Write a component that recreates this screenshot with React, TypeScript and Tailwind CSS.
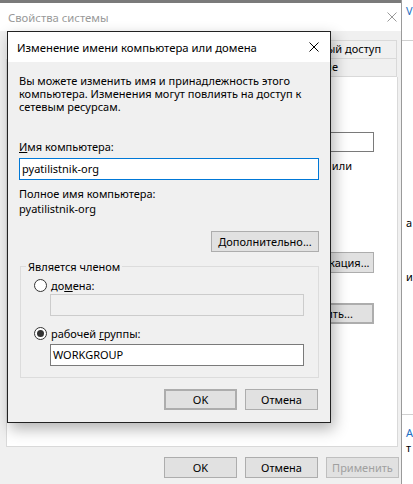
import type { ReactNode } from "react";

function CloseIcon({ color = "#000" }: { color?: string }) {
  return (
    <svg width="10" height="10" viewBox="0 0 10 10">
      <path d="M0.5 0.5 L9.5 9.5 M9.5 0.5 L0.5 9.5" stroke={color} strokeWidth="1" />
    </svg>
  );
}

function Btn({
  children,
  className = "",
}: {
  children: ReactNode;
  className?: string;
}) {
  return (
    <div
      className={`flex items-center justify-center h-[21px] bg-[#e1e1e1] border border-[#adadad] leading-[15px] whitespace-nowrap overflow-hidden ${className}`}
    >
      {children}
    </div>
  );
}

function Radio({ checked }: { checked?: boolean }) {
  return (
    <div className="flex items-center justify-center w-[13px] h-[13px] rounded-full border border-[#333] bg-white">
      {checked && <div className="w-[7px] h-[7px] rounded-full bg-[#333]" />}
    </div>
  );
}

// "Свойства системы" window, mostly covered by the dialog
function BackgroundWindow() {
  return (
    <div className="flex flex-col w-[405px] h-full border-r border-[#9a9a9a] bg-[#f0f0f0]">
      <div className="h-[3px] bg-[#7a7a7a]" />
      <div className="flex items-center justify-between h-[28px] bg-white pl-[8px] pr-[4px]">
        <span className="text-[#999] text-[11.3px] leading-[15px]">Свойства системы</span>
        <CloseIcon color="#999" />
      </div>

      <div className="pt-[9px]">
        <div className="flex h-[19px] ml-[8px] mr-[4px]">
          <div className="flex-1 border border-[#d9d9d9] border-r-0" />
          <div className="flex-1 border border-[#d9d9d9] border-r-0" />
          <div className="flex-1 flex items-center justify-center border border-[#d9d9d9] whitespace-nowrap">
            Удаленный доступ
          </div>
        </div>
        <div className="flex h-[18px] ml-[6px] mr-[4px]">
          <div className="flex-1 bg-white border-l border-[#d9d9d9]" />
          <div className="flex-1 flex items-center justify-center border-x border-b border-[#d9d9d9] whitespace-nowrap">
            Оборудование
          </div>
        </div>
      </div>

      <div className="flex flex-col items-end h-[370px] ml-[6px] mr-[3px] bg-white border border-t-0 border-[#d9d9d9] pr-[23px]">
        <div className="mt-[55px] h-[20px] w-[220px] border border-[#7a7a7a]" />
        <div className="mt-[6px] mr-[22px] h-[15px] leading-[15px] whitespace-nowrap">
          "Компьютер в гостиной" или
        </div>
        <Btn className="mt-[79px] w-[104px]">Идентификация...</Btn>
        <Btn className="mt-[30px] w-[104px] border-2 border-[#0078d7]">Изменить...</Btn>
      </div>

      <div className="flex justify-end gap-[8px] pr-[2px] mt-[10px]">
        <Btn className="w-[73px]">OK</Btn>
        <Btn className="w-[73px]">Отмена</Btn>
        <Btn className="w-[73px] bg-[#cccccc] border-[#bfbfbf] text-[#a0a0a0]">Применить</Btn>
      </div>
    </div>
  );
}

function RightStrip() {
  return (
    <div className="flex-1 flex flex-col bg-white pl-[4px] whitespace-nowrap leading-[15px]">
      <div className="mt-[3px] text-[#1e6fc4]">V</div>
      <div className="mt-[22px] -ml-[4px] h-px bg-[#d0d0d0]" />
      <div className="mt-[174px]">а</div>
      <div className="mt-[39px]">и</div>
      <div className="mt-[130px] -ml-[4px] h-px bg-[#d0d0d0]" />
      <div className="mt-[10px] text-[#1e6fc4]">А</div>
      <div>т</div>
    </div>
  );
}

function ChangeNameDialog() {
  return (
    <div className="absolute left-[7px] top-[31px] w-[324px] h-[392px] flex flex-col border border-[#222] bg-[#f0f0f0] shadow-[3px_6px_14px_rgba(0,0,0,0.3)]">
      <div className="shrink-0 flex items-center justify-between h-[30px] bg-white pl-[9px] pr-[11px]">
        <span className="text-[11.3px] leading-[15px]">Изменение имени компьютера или домена</span>
        <CloseIcon />
      </div>

      <div className="flex-1 flex flex-col px-[11px] pt-[12px]">
        <p className="leading-[13px]">
          Вы можете изменить имя и принадлежность этого
          <br />
          компьютера. Изменения могут повлиять на доступ к
          <br />
          сетевым ресурсам.
        </p>

        <div className="mt-[26px] leading-[15px]">
          <span className="underline">И</span>мя компьютера:
        </div>
        <div className="mt-[4px] flex items-center h-[22px] border border-[#0078d7] bg-white px-[2px]">
          pyatilistnik-org
        </div>

        <div className="mt-[6px] leading-[15px]">Полное имя компьютера:</div>
        <div className="leading-[15px]">pyatilistnik-org</div>

        <Btn className="mt-[15px] self-end w-[108px]">
          <span>
            <span className="underline">Д</span>ополнительно...
          </span>
        </Btn>

        <fieldset className="mt-[7px] ml-[1px] border border-[#dcdcdc]">
          <legend className="ml-[5px] px-[2px] leading-[15px]">Является членом</legend>
          <div className="pl-[13px] pr-[14px] pb-[11px]">
            <div className="mt-[4px] flex items-center gap-[4px] h-[15px] leading-[15px]">
              <Radio />
              <span>
                до<span className="underline">м</span>ена:
              </span>
            </div>
            <div className="mt-[1px] ml-[16px] h-[22px] border border-[#cccccc] bg-[#f0f0f0]" />
            <div className="mt-[10px] flex items-center gap-[4px] h-[15px] leading-[15px]">
              <Radio checked />
              <span>
                рабочей <span className="underline">г</span>руппы:
              </span>
            </div>
            <div className="mt-[3px] ml-[16px] flex items-center h-[22px] border border-[#7a7a7a] bg-white px-[2px]">
              WORKGROUP
            </div>
          </div>
        </fieldset>

        <div className="mt-[11px] flex justify-end gap-[8px] pr-[1px]">
          <Btn className="w-[73px] border-2 border-[#0078d7]">OK</Btn>
          <Btn className="w-[73px]">Отмена</Btn>
        </div>
      </div>
    </div>
  );
}

export default function App() {
  return (
    <div className="relative w-[413px] h-[484px] overflow-hidden bg-white text-[11px] text-black font-['Noto_Sans',sans-serif]">
      <div className="flex h-full">
        <BackgroundWindow />
        <RightStrip />
      </div>
      <ChangeNameDialog />
    </div>
  );
}
